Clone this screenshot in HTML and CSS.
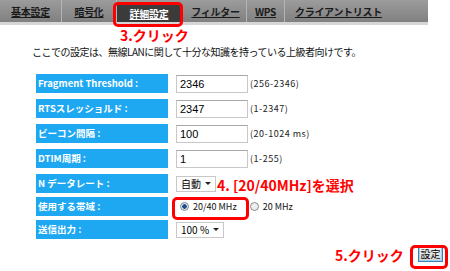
FILE: index.html
```html
<!DOCTYPE html>
<html lang="ja">
<head>
  <meta charset="UTF-8" />
  <title>詳細設定</title>
  <link rel="stylesheet" href="styles.css">
</head>
<body>
  <nav class="tabs">
    <a class="tab t1">基本設定</a>
    <a class="tab t2">暗号化</a>
    <a class="tab t3 active">詳細設定</a>
    <a class="tab t4">フィルター</a>
    <a class="tab t5">WPS</a>
    <a class="tab t6">クライアントリスト</a>
  </nav>

  <div class="page">
    <p class="intro">ここでの設定は、無線LANに関して十分な知識を持っている上級者向けです。</p>

    <div class="form">
      <div class="row">
        <div class="label">Fragment Threshold :</div>
        <div class="input">2346</div>
        <span class="range">(256-2346)</span>
      </div>
      <div class="row">
        <div class="label">RTSスレッショルド :</div>
        <div class="input">2347</div>
        <span class="range">(1-2347)</span>
      </div>
      <div class="row">
        <div class="label">ビーコン間隔 :</div>
        <div class="input">100</div>
        <span class="range">(20-1024 ms)</span>
      </div>
      <div class="row">
        <div class="label">DTIM周期 :</div>
        <div class="input">1</div>
        <span class="range">(1-255)</span>
      </div>
      <div class="row tight">
        <div class="label">N データレート :</div>
        <div class="select auto">自動 <span class="arrow"></span></div>
      </div>
      <div class="row tight">
        <div class="label">使用する帯域 :</div>
        <div class="radios">
          <span class="radio checked"></span><span class="opt">20/40 MHz</span>
          <span class="radio"></span><span class="opt">20 MHz</span>
        </div>
      </div>
      <div class="row">
        <div class="label">送信出力 :</div>
        <div class="select power">100 % <span class="arrow"></span></div>
      </div>
    </div>

    <div class="actions">
      <button class="btn-set">設定</button>
    </div>
  </div>

  <!-- annotations drawn over the screenshot -->
  <div class="mark mark-tab"></div>
  <div class="note note-tab">3.クリック</div>
  <div class="mark mark-radio"></div>
  <div class="note note-radio">4. [20/40MHz]を選択</div>
  <div class="mark mark-btn"></div>
  <div class="note note-btn">5.クリック</div>
</body>
</html>
```

FILE: styles.css
```css
* {
  margin: 0;
  padding: 0;
  box-sizing: border-box;
}

body {
  background: #fff;
  width: 450px;
  height: 271px;
  position: relative;
  overflow: hidden;
  font-family: "Noto Sans CJK JP", "DejaVu Sans", sans-serif;
  color: #111;
}

.tabs {
  width: 428px;
  height: 25px;
  display: flex;
  background: linear-gradient(#9c9c9c, #808080);
  border-bottom: 3px solid #d6d6d6;
}

.tab {
  height: 22px;
  display: flex;
  align-items: center;
  justify-content: center;
  font-size: 10px;
  font-weight: bold;
  color: #1a1a1a;
  text-decoration: underline;
  border-right: 1px solid #b4b4b4;
  letter-spacing: -0.3px;
}

.t1 { width: 62px; }
.t2 { width: 55px; }
.t3 { width: 64px; }
.t4 { width: 66px; padding-left: 4px; }
.t5 { width: 38px; }
.t6 {
  flex: 1;
  border-right: none;
  justify-content: flex-start;
  padding-left: 10px;
}

.tab.active {
  background: #3b3b3b;
  color: #fff;
  margin-top: 4px;
  height: 18px;
  border-right: none;
}

.page {
  padding: 21px 0 0 32px;
}

.intro {
  font-size: 10px;
  letter-spacing: -0.5px;
  line-height: 12px;
}

.form {
  margin-top: 16px;
  padding-left: 4px;
}

.row {
  display: flex;
  align-items: center;
  height: 19px;
  margin-bottom: 6px;
}

.row.tight {
  margin-bottom: 4px;
}

.label {
  width: 132px;
  height: 19px;
  background: #1ea8f2;
  color: #fff;
  font-size: 9.5px;
  font-weight: bold;
  line-height: 19px;
  padding-left: 2px;
  margin-right: 8px;
  white-space: nowrap;
}

.input {
  width: 72px;
  height: 18px;
  border: 1px solid #c8c8c8;
  border-top-color: #a8a8a8;
  font-family: "Liberation Sans", sans-serif;
  font-size: 11px;
  line-height: 16px;
  padding-left: 3px;
  color: #000;
}

.range {
  margin-left: 2px;
  font-size: 9px;
  letter-spacing: 0.5px;
  color: #222;
}

.select {
  height: 16px;
  border: 1px solid #c8c8c8;
  display: flex;
  align-items: center;
  font-size: 10px;
  padding-left: 4px;
  color: #000;
}

.select.auto { width: 40px; }
.select.power { width: 48px; }

.arrow {
  margin-left: auto;
  margin-right: 4px;
  width: 0;
  height: 0;
  border-left: 3px solid transparent;
  border-right: 3px solid transparent;
  border-top: 3px solid #222;
}

.radios {
  display: flex;
  align-items: center;
  padding-left: 4px;
  font-size: 9px;
}

.radio {
  width: 9px;
  height: 9px;
  border-radius: 50%;
  border: 1px solid #8a8a8a;
  background: #eee;
  margin-right: 4px;
}

.radio.checked {
  background: radial-gradient(circle, #1a4f8a 0 2px, #d8e6f2 2.5px);
}

.opt {
  margin-right: 13px;
}

.actions {
  display: flex;
  justify-content: flex-end;
  padding-right: 7px;
  margin-top: 7px;
}

.btn-set {
  width: 25px;
  height: 16px;
  font-family: "Noto Sans CJK JP", sans-serif;
  font-size: 10px;
  line-height: 12px;
  color: #000;
  background: linear-gradient(#f4f4f4, #d4d4d4);
  border: 1px solid #3c7fb1;
  box-shadow: inset 0 0 0 1px #9fd2f2;
}

.mark {
  position: absolute;
  border: 3px solid #f00;
  border-radius: 5px;
}

.mark-tab { left: 113px; top: 2px; width: 70px; height: 25px; }
.mark-radio { left: 172px; top: 197px; width: 77px; height: 23px; }
.mark-btn { left: 410px; top: 245px; width: 38px; height: 24px; }

.note {
  position: absolute;
  color: #f00;
  font-weight: bold;
  font-size: 14px;
  line-height: 15px;
  white-space: nowrap;
}

.note-tab { left: 120px; top: 28px; }
.note-radio { left: 217px; top: 178px; }
.note-btn { left: 335px; top: 248px; }
```
